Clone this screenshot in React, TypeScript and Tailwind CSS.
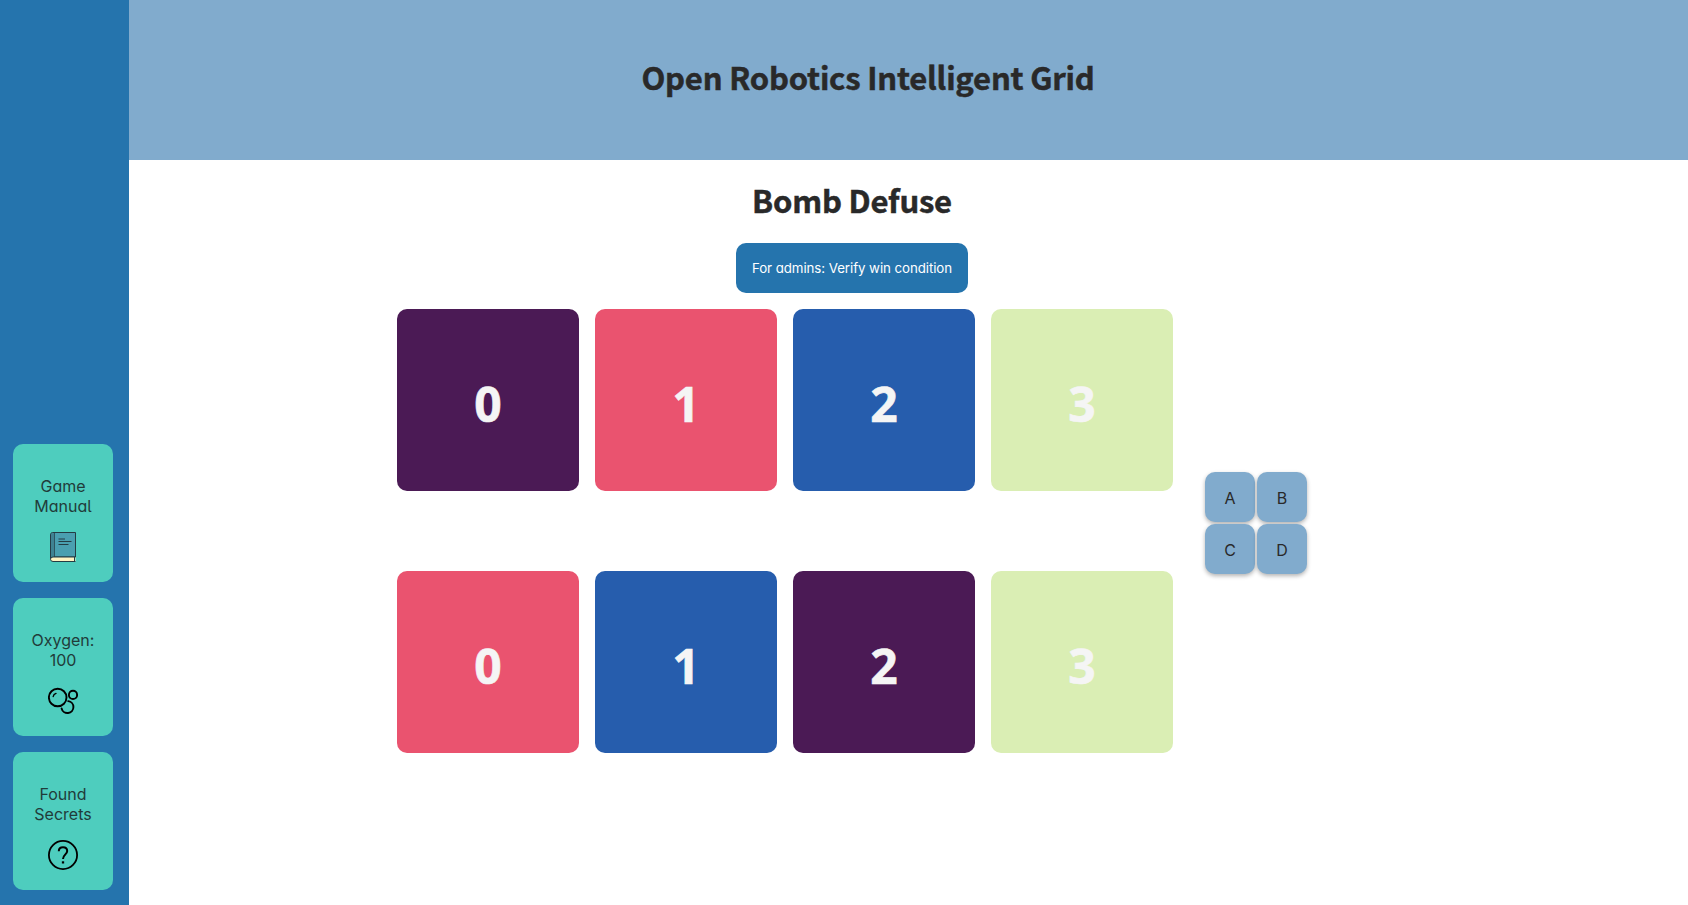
import type { ReactNode } from "react";

const bodyFont =
  "font-['Inter','Liberation_Sans',sans-serif] [font-feature-settings:'cv11','cv05']";
const headingFont =
  "font-['Noto_Sans_CJK_JP','Open_Sans',sans-serif] font-bold tracking-[-0.2px] [-webkit-text-stroke:0.5px_#292929]";

const rows = [
  ["bg-[#4b1a55]", "bg-[#ea536f]", "bg-[#265dad]", "bg-[#daeeb4]"],
  ["bg-[#ea536f]", "bg-[#265dad]", "bg-[#4b1a55]", "bg-[#daeeb4]"],
];

function BookIcon() {
  return (
    <svg width="30" height="30" viewBox="0 0 30 30" fill="none" stroke="#243c44" strokeWidth="1">
      <path d="M2.500 26V3Q2.500 .5 4.500 .5H27.500V25H5Q2.500 25 2.500 27Z" fill="#4a9fb0" />
      <path d="M3 2Q3.500 1 6.500 1V25H4L3 26Z" fill="#3f8292" stroke="none" />
      <path d="M6.500 .5V25" strokeWidth=".7" />
      <path d="M27.500 25H5Q2.500 25 2.500 27.200T5 29.500H27.500" fill="#fff3c2" />
      <path d="M26.500 25V29.500" />
      <path d="M10.500 7H17M10.500 9.500H23.500M10.500 12.500H20.500" />
    </svg>
  );
}

function BubblesIcon() {
  return (
    <svg width="30" height="30" viewBox="0 0 30 30" fill="none" stroke="#000" strokeWidth="1.900" strokeLinecap="round">
      <circle cx="9.700" cy="11.500" r="8.800" />
      <path d="M5.200 10.500Q5.600 8.100 8 7.400" strokeWidth="1.400" />
      <circle cx="25" cy="8.900" r="4.100" />
      <path d="M20.200 15.100A6 6 0 1 1 13.600 22.500" />
    </svg>
  );
}

function QuestionIcon() {
  return (
    <svg width="30" height="30" viewBox="0 0 30 30" fill="none" stroke="#000" strokeWidth="1.800">
      <circle cx="15" cy="15" r="14.100" />
      <path d="M10.800 11.300C10.800 8.700 12.500 7.300 15 7.300S19.200 8.800 19.200 11.100C19.200 14.200 15 14.700 15 19" strokeWidth="2" />
      <path d="M15 21.300V23.500" strokeWidth="2.300" />
    </svg>
  );
}

function SideCard({ lines, icon }: { lines: [string, string]; icon: ReactNode }) {
  return (
    <button className="flex h-[138px] w-[100px] flex-col items-center rounded-[10px] bg-[#4ecdbe] pt-8 text-base leading-5 text-[#213c3a]">
      <span>{lines[0]}</span>
      <span>{lines[1]}</span>
      <span className="mt-4">{icon}</span>
    </button>
  );
}

export default function App() {
  return (
    <div className={`flex h-screen overflow-hidden bg-white text-[#292929] ${bodyFont}`}>
      <aside className="flex w-[129px] shrink-0 flex-col justify-end gap-4 bg-[#2574ad] pb-[15px] pl-[13px]">
        <SideCard lines={["Game", "Manual"]} icon={<BookIcon />} />
        <SideCard lines={["Oxygen:", "100"]} icon={<BubblesIcon />} />
        <SideCard lines={["Found", "Secrets"]} icon={<QuestionIcon />} />
      </aside>
      <div className="flex flex-1 flex-col">
        <header className="flex h-40 items-center justify-center bg-[#81abcd] pr-[81px] pb-[7px]">
          <h1 className={`text-[31px] leading-10 ${headingFont}`}>Open Robotics Intelligent Grid</h1>
        </header>
        <main className="flex flex-col items-center pt-5 pr-[113px]">
          <h2 className={`text-[31px] leading-10 ${headingFont}`}>Bomb Defuse</h2>
          <button className="mt-[23px] h-[50px] w-[232px] rounded-[10px] bg-[#2574ad] pt-px text-[13.3px] tracking-[-0.07px] whitespace-nowrap text-white">
            For admins: Verify win condition
          </button>
          <div className="mt-4 flex items-center gap-8">
            <div className="flex flex-col gap-20">
              {rows.map((row, r) => (
                <div key={r} className="flex gap-4">
                  {row.map((color, i) => (
                    <div
                      key={i}
                      className={`flex size-[182px] items-center justify-center rounded-[10px] pt-[7px] text-5xl font-bold text-[#f5f5f5] [-webkit-text-stroke:0.6px_#f5f5f5] font-['Open_Sans','Noto_Sans',sans-serif] ${color}`}
                    >
                      {i}
                    </div>
                  ))}
                </div>
              ))}
            </div>
            <div className="grid grid-cols-2 gap-0.5 pb-4">
              {["A", "B", "C", "D"].map((label) => (
                <button
                  key={label}
                  className="size-[50px] rounded-[10px] bg-[#81abcd] pt-0.5 text-base text-[#292929] shadow-[0_2px_4px_rgba(0,0,0,0.3)]"
                >
                  {label}
                </button>
              ))}
            </div>
          </div>
        </main>
      </div>
    </div>
  );
}
